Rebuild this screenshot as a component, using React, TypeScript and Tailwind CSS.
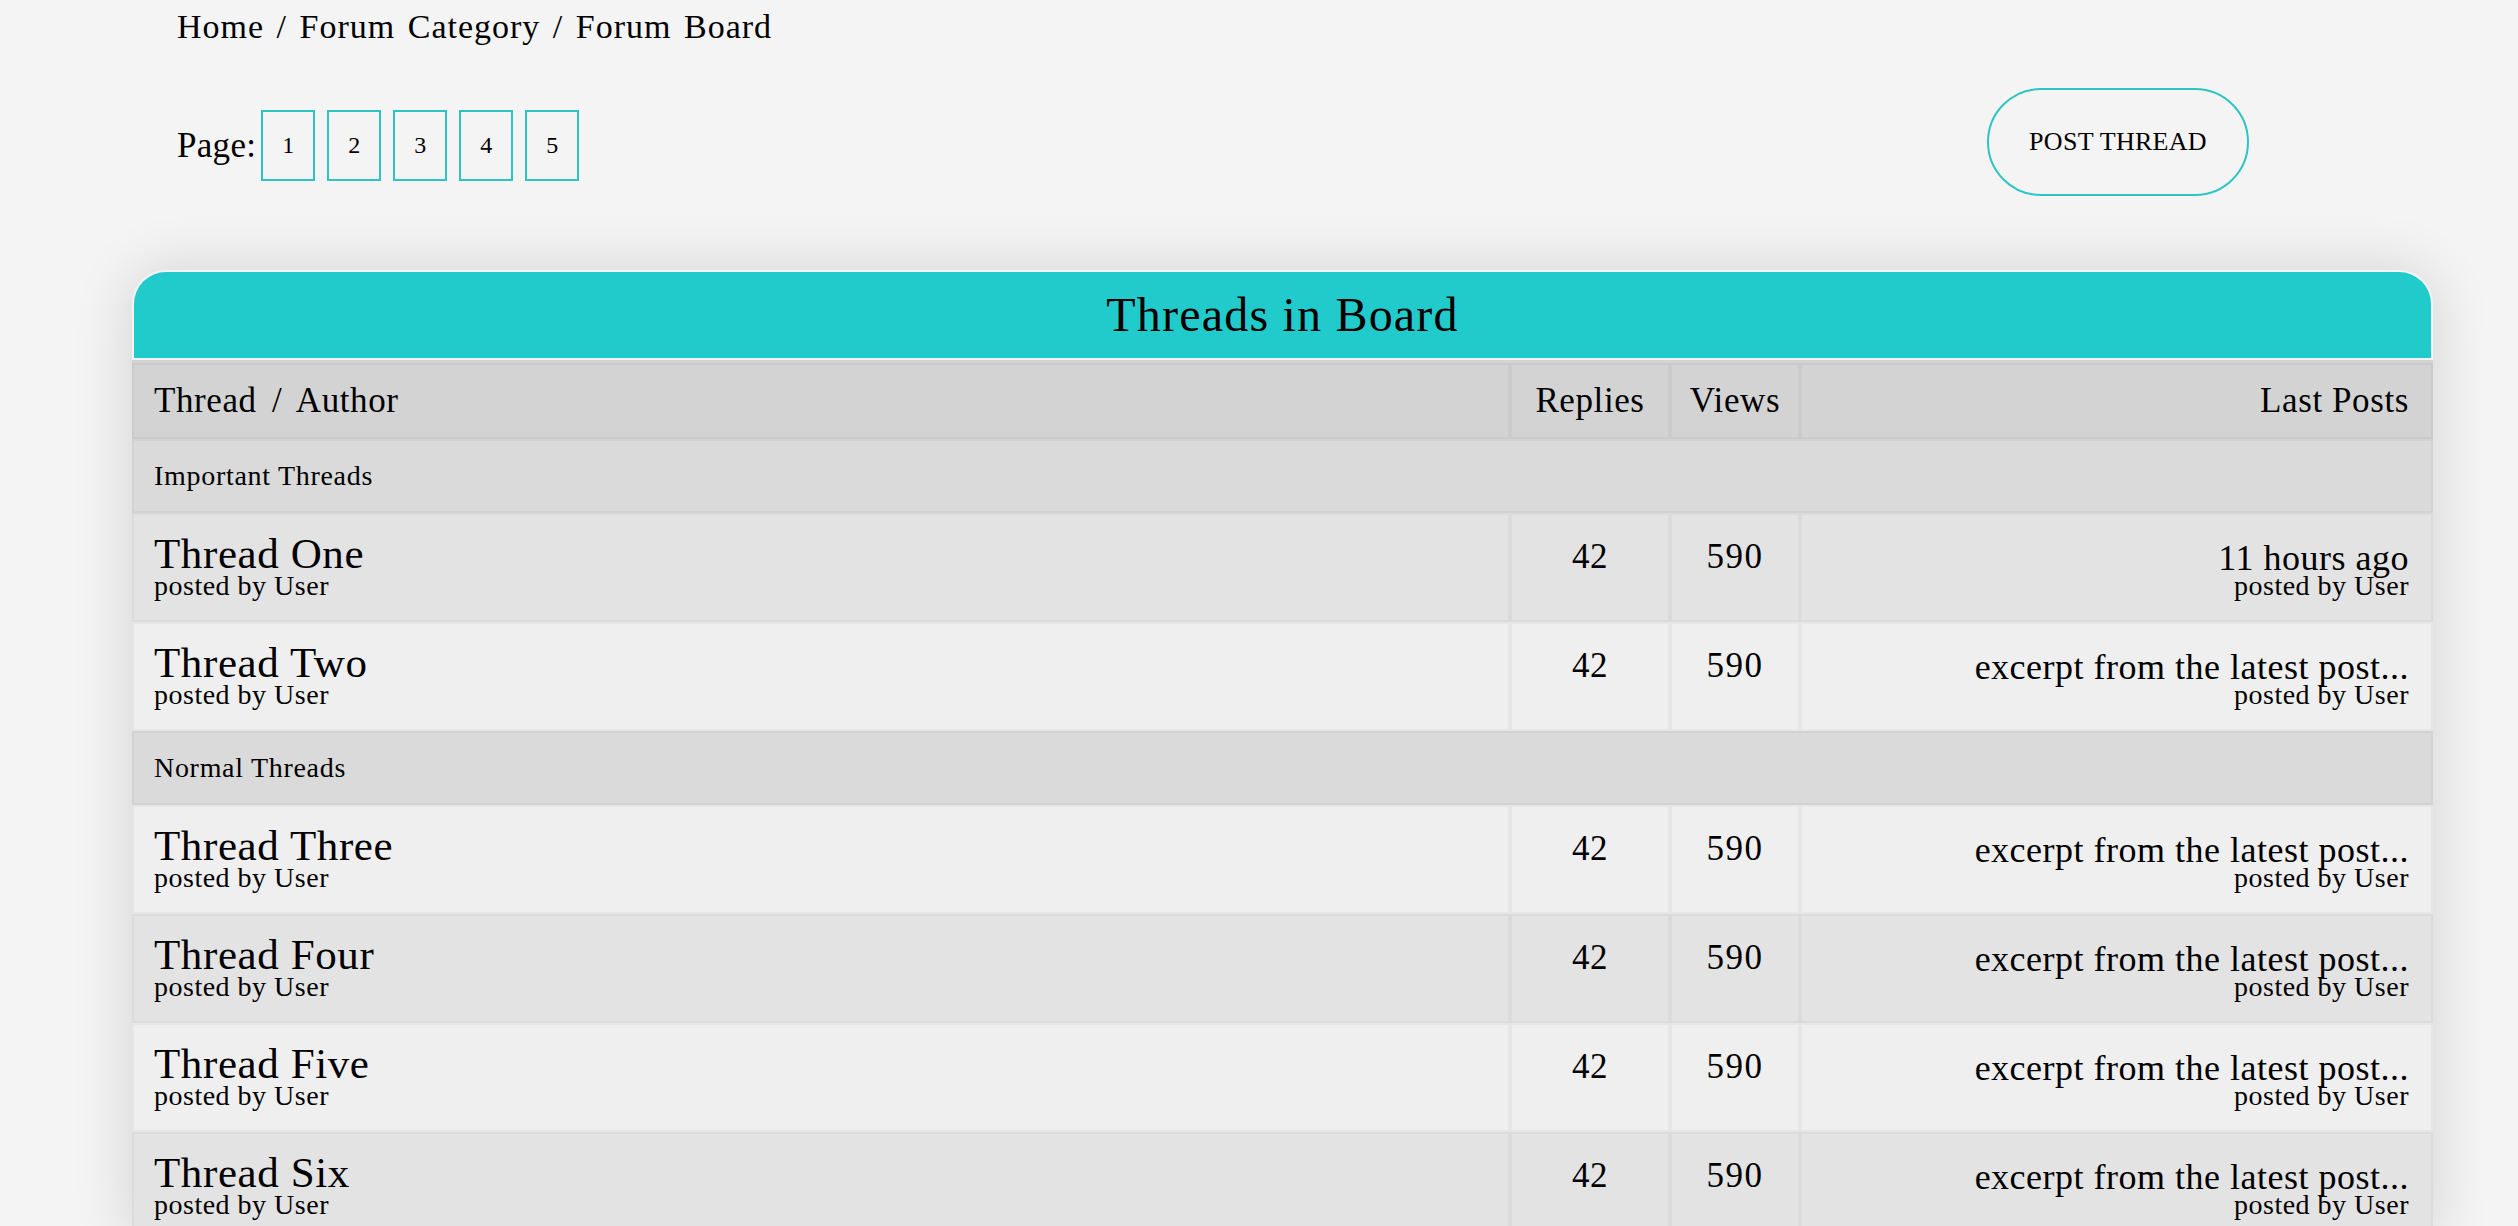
import React from "react";

const rows: Array<
  | { kind: "cat"; label: string }
  | { kind: "thread"; title: string; last: string; tone: "dark" | "light" }
> = [
  { kind: "cat", label: "Important Threads" },
  { kind: "thread", title: "Thread One", last: "11 hours ago", tone: "dark" },
  { kind: "thread", title: "Thread Two", last: "excerpt from the latest post...", tone: "light" },
  { kind: "cat", label: "Normal Threads" },
  { kind: "thread", title: "Thread Three", last: "excerpt from the latest post...", tone: "light" },
  { kind: "thread", title: "Thread Four", last: "excerpt from the latest post...", tone: "dark" },
  { kind: "thread", title: "Thread Five", last: "excerpt from the latest post...", tone: "light" },
  { kind: "thread", title: "Thread Six", last: "excerpt from the latest post...", tone: "dark" },
];

const cell = "border-2 border-black/[0.035]";

export default function App() {
  return (
    <div className="min-h-screen bg-[#f4f4f4] text-black font-['Liberation_Serif',serif] overflow-hidden">
      <div className="ml-[177px] w-[2072px] pt-[8px]">
        <div className="text-[34px] leading-[38px] tracking-[1px] [word-spacing:3px]">
          Home / Forum Category / Forum Board
        </div>
        <div className="mt-[42px] flex items-center justify-between h-[108px]">
          <div className="flex items-center gap-[12px] pt-[6px]">
            <span className="text-[35px] leading-none mr-[-7px] tracking-[0.3px]">Page:</span>
            {[1, 2, 3, 4, 5].map((n) => (
              <div
                key={n}
                className="w-[54px] h-[71px] border-2 border-[#2ec4c4] flex items-center justify-center text-[24px]"
              >
                {n}
              </div>
            ))}
          </div>
          <button className="w-[262px] h-[108px] rounded-full border-2 border-[#2ec4c4] text-[26px] leading-none tracking-[0.3px]">
            POST THREAD
          </button>
        </div>
      </div>

      <div className="mt-[74px] ml-[132px] w-[2301px] rounded-t-[34px] bg-[#efefef] shadow-[0_0_60px_rgba(0,0,0,0.14)] flex flex-col">
        <div className="h-[88px] rounded-t-[34px] bg-[#22cbcb] flex items-center justify-center text-[48px] tracking-[1.2px] border-2 border-b-0 border-[#f3f3f3]">
          Threads in Board
        </div>
        <div className="h-[2px] bg-[#f3f3f3]" />
        <div className="grid grid-cols-[1378px_160px_130px_633px] h-[79px] bg-[#d3d3d3] text-[35px] tracking-[0.6px] pt-[3px]">
          <div className={`${cell} border-black/[0.04] flex items-center pl-[20px] [word-spacing:6px]`}>Thread / Author</div>
          <div className={`${cell} border-black/[0.04] flex items-center justify-center`}>Replies</div>
          <div className={`${cell} border-black/[0.04] flex items-center justify-center`}>Views</div>
          <div className={`${cell} border-black/[0.04] flex items-center justify-end pr-[22px]`}>Last Posts</div>
        </div>
        {rows.map((r, i) =>
          r.kind === "cat" ? (
            <div key={i} className={`h-[74px] bg-[#dadada] ${cell} flex items-center pl-[20px] text-[28px] tracking-[0.7px]`}>
              {r.label}
            </div>
          ) : (
            <div
              key={i}
              className={`grid grid-cols-[1378px_160px_130px_633px] h-[109px] ${
                r.tone === "dark" ? "bg-[#e3e3e3]" : "bg-[#efefef]"
              }`}
            >
              <div className={`${cell} flex flex-col justify-center pl-[20px] pb-[4px]`}>
                <div className="text-[43px] leading-[40px] tracking-[0.6px]">{r.title}</div>
                <div className="text-[28px] leading-[24px] tracking-[0.5px]">posted by User</div>
              </div>
              <div className={`${cell} flex items-center justify-center text-[35px] tracking-[0.5px] pb-[20px]`}>42</div>
              <div className={`${cell} flex items-center justify-center text-[35px] tracking-[1.5px] pb-[20px]`}>590</div>
              <div className={`${cell} flex flex-col justify-center items-end pr-[22px] pt-[2px]`}>
                <div className="text-[36px] leading-[34px] tracking-[0.5px]">{r.last}</div>
                <div className="text-[28px] leading-[22px] tracking-[0.5px]">posted by User</div>
              </div>
            </div>
          )
        )}
      </div>
    </div>
  );
}
